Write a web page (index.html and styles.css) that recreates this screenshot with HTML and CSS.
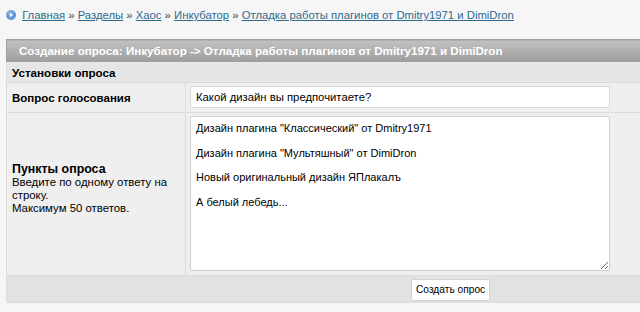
FILE: index.html
```html
<!DOCTYPE html>
<html>
<head>
  <title>Создание опроса</title>
  <link rel="stylesheet" href="styles.css">
</head>
<body>
  <div class="crumbs">
    <span class="crumb-icon"></span>
    <a href="#">Главная</a> &raquo; <a href="#">Разделы</a> &raquo; <a href="#">Хаос</a> &raquo; <a href="#">Инкубатор</a> &raquo; <a href="#">Отладка работы плагинов от Dmitry1971 и DimiDron</a>
  </div>

  <table class="poll">
    <tr>
      <th colspan="2" class="title">Создание опроса: Инкубатор -&gt; Отладка работы плагинов от Dmitry1971 и DimiDron</th>
    </tr>
    <tr>
      <td colspan="2" class="section">Установки опроса</td>
    </tr>
    <tr>
      <td class="label"><b class="q">Вопрос голосования</b></td>
      <td class="field"><input class="question" value="Какой дизайн вы предпочитаете?"></td>
    </tr>
    <tr>
      <td class="label label-items">
        <b class="items">Пункты опроса</b><br>
        <span class="hint">Введите по одному ответу на строку.<br>Максимум 50 ответов.</span>
      </td>
      <td class="field">
<textarea class="answers">Дизайн плагина "Классический" от Dmitry1971

Дизайн плагина "Мультяшный" от DimiDron

Новый оригинальный дизайн ЯПлакалъ

А белый лебедь...</textarea>
      </td>
    </tr>
    <tr>
      <td colspan="2" class="footer"><button class="submit">Создать опрос</button></td>
    </tr>
  </table>
</body>
</html>
```

FILE: styles.css
```css
body {
  font-family: 'Liberation Sans', Arial, sans-serif;
  font-size: 11.3px;
  background-color: #f6f6f6;
  margin: 0;
  padding: 0 0 0 6px;
  overflow: hidden;
  color: #000;
}

.crumbs {
  height: 30px;
  line-height: 30px;
  white-space: nowrap;
  color: #444;
}

.crumbs a {
  color: #2f6a8e;
}

.crumb-icon {
  display: inline-block;
  width: 10px;
  height: 10px;
  border-radius: 50%;
  background: radial-gradient(circle at 40% 35%, #8fb8e8, #3c78c8);
  vertical-align: -1px;
  margin-right: 3px;
  position: relative;
}

.crumb-icon::after {
  content: "";
  position: absolute;
  left: 4px;
  top: 3px;
  border-left: 3px solid #fff;
  border-top: 2px solid transparent;
  border-bottom: 2px solid transparent;
}

.poll {
  width: 660px;
  margin-top: 9px;
  border-collapse: collapse;
  border-left: 1px solid #d6d6d6;
  border-bottom: 1px solid #d6d6d6;
}

.poll td, .poll th {
  padding: 0;
  border: 1px solid #dcdcdc;
}

.title {
  height: 21px;
  text-align: left;
  padding-left: 12px !important;
  color: #fff;
  font-size: 11.6px;
  font-weight: bold;
  background: linear-gradient(#c2c2c2, #9d9d9d);
  border-color: #a0a0a0 !important;
  white-space: nowrap;
}

.section {
  height: 20px;
  padding-left: 5px !important;
  font-weight: bold;
  font-size: 11.6px;
  background-color: #e6e6e6;
}

.label {
  width: 173px;
  padding-left: 5px !important;
  background-color: #efefef;
}

.label-items {
  padding-bottom: 12px !important;
}

.q {
  font-size: 11.5px;
}

.items {
  font-size: 12.4px;
}

.hint {
  font-size: 11.4px;
  line-height: 13px;
}

.field {
  background-color: #efefef;
  padding: 3px 0 4px 4px !important;
}

.question {
  width: 420px;
  height: 22px;
  box-sizing: border-box;
  border: 1px solid #d8d8d8;
  border-radius: 2px;
  font-family: 'Liberation Sans', Arial, sans-serif;
  font-size: 11.3px;
  padding: 0 5px;
  display: block;
}

.answers {
  width: 420px;
  height: 155px;
  box-sizing: border-box;
  border: 1px solid #cfcfcf;
  border-radius: 2px;
  font-family: 'Liberation Sans', Arial, sans-serif;
  font-size: 11px;
  line-height: 12.3px;
  padding: 5px 5px;
  display: block;
  resize: both;
}

.footer {
  height: 26px;
  background-color: #e2e2e2;
  padding-left: 404px !important;
}

.submit {
  font-family: 'Liberation Sans', Arial, sans-serif;
  font-size: 10.2px;
  background-color: #fff;
  border: 1px solid #d4d4d4;
  border-radius: 2px;
  height: 22px;
  margin-top: 1px;
  padding: 0 4px;
  display: block;
}
```
